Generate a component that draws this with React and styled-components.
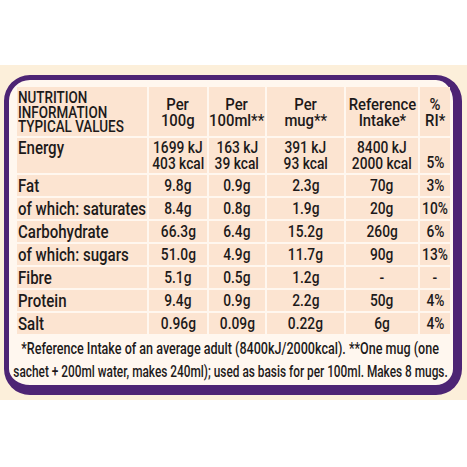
import styled, { createGlobalStyle } from 'styled-components';

const Global = createGlobalStyle`
  html, body { margin: 0; padding: 0; background: #fff; }
  body {
    font-family: Roboto, "Liberation Sans", sans-serif;
    font-weight: 500;
    color: #1d1a1a;
  }
`;

const Band = styled.div`
  margin-top: 65px;
  height: 335px;
  box-sizing: border-box;
  padding: 10px 5px 5px 4px;
  background: #fcefda;
`;

const Frame = styled.div`
  box-sizing: border-box;
  height: 100%;
  border: solid #4d2474;
  border-width: 5px 9px 10px 5px;
  border-radius: 26px;
  background: #fff7ef;
  padding: 7px 5px 0 8px;
`;

const Table = styled.div`
  display: grid;
  grid-template-columns: 130px 58px 56px 77px 72px 30px;
  grid-template-rows: 49px 35px repeat(7, 21px);
  gap: 2px;
`;

const Cell = styled.div`
  background: #fce4d1;
  display: flex;
  flex-direction: column;
  justify-content: ${p => (p.$v === 'top' ? 'flex-start' : p.$v === 'bottom' ? 'flex-end' : 'center')};
  align-items: ${p => (p.$left ? 'flex-start' : 'center')};
  padding: ${p => (p.$left ? '0 0 0 1px' : '0')};
  font-size: ${p => (p.$left ? '17.5px' : '16px')};
  line-height: ${p => (p.$multi ? '16px' : '20px')};
  white-space: nowrap;
`;

const HeadTitle = styled(Cell)`
  justify-content: flex-start;
  padding-top: 4px;
  font-size: 16px;
  line-height: 14.5px;
  text-transform: uppercase;
`;

const HeadCell = styled(Cell)`
  font-size: 16.5px;
  line-height: 16.5px;
  padding-top: 3px;
`;

// condensed look: the printed face is much narrower than any installed font
const Line = styled.span`
  display: inline-block;
  transform: scaleX(${p => p.$sx || 0.86});
  transform-origin: ${p => (p.$left ? 'left center' : 'center')};
`;

const Note = styled.div`
  margin-top: 3px;
  margin-left: -4px;
  display: flex;
  flex-direction: column;
  align-items: center;
  font-size: 16px;
  line-height: 23px;
  white-space: nowrap;
`;

const rows = [
  ['Fat', '9.8g', '0.9g', '2.3g', '70g', '3%'],
  ['of which: saturates', '8.4g', '0.8g', '1.9g', '20g', '10%'],
  ['Carbohydrate', '66.3g', '6.4g', '15.2g', '260g', '6%'],
  ['of which: sugars', '51.0g', '4.9g', '11.7g', '90g', '13%'],
  ['Fibre', '5.1g', '0.5g', '1.2g', '-', '-'],
  ['Protein', '9.4g', '0.9g', '2.2g', '50g', '4%'],
  ['Salt', '0.96g', '0.09g', '0.22g', '6g', '4%'],
];

const heads = [
  ['Per', '100g'],
  ['Per', '100ml**'],
  ['Per', 'mug**'],
  ['Reference', 'Intake*'],
  ['%', 'RI*'],
];

const energy = [
  ['1699 kJ', '403 kcal'],
  ['163 kJ', '39 kcal'],
  ['391 kJ', '93 kcal'],
  ['8400 kJ', '2000 kcal'],
];

export default function App() {
  return (
    <>
      <Global />
      <Band>
        <Frame>
          <Table>
            <HeadTitle $left>
              <Line $left $sx={0.84}>Nutrition</Line>
              <Line $left $sx={0.84}>Information</Line>
              <Line $left $sx={0.84}>Typical Values</Line>
            </HeadTitle>
            {heads.map(h => (
              <HeadCell key={h[1]}>
                <Line $sx={0.9}>{h[0]}</Line>
                <Line $sx={0.9}>{h[1]}</Line>
              </HeadCell>
            ))}

            <Cell $left $v="top"><Line $left>Energy</Line></Cell>
            {energy.map(e => (
              <Cell key={e[0]} $multi>
                <Line>{e[0]}</Line>
                <Line>{e[1]}</Line>
              </Cell>
            ))}
            <Cell $v="bottom"><Line>5%</Line></Cell>

            {rows.map(r =>
              r.map((v, i) => (
                <Cell key={r[0] + i} $left={i === 0}>
                  <Line $left={i === 0}>{v}</Line>
                </Cell>
              ))
            )}
          </Table>
          <Note>
            <Line $sx={0.785}>*Reference Intake of an average adult (8400kJ/2000kcal). **One mug (one</Line>
            <Line $sx={0.74}>sachet + 200ml water, makes 240ml); used as basis for per 100ml. Makes 8 mugs.</Line>
          </Note>
        </Frame>
      </Band>
    </>
  );
}
